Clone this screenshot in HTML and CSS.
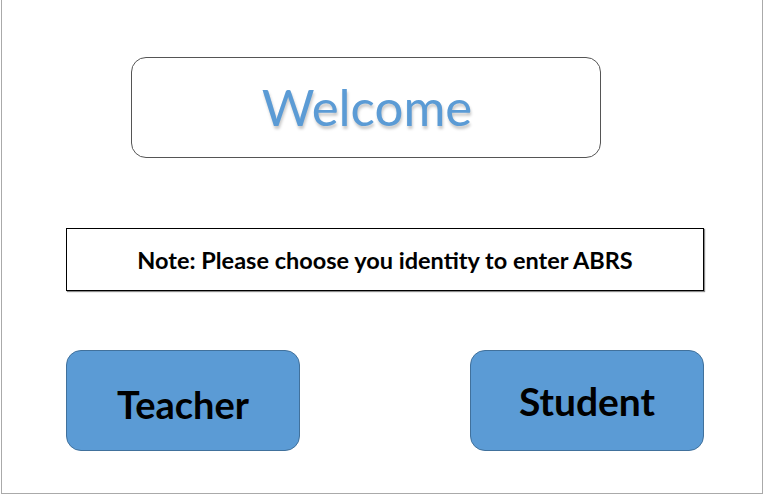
FILE: index.html
```html
<!DOCTYPE html>
<html>
<head>
<meta charset="utf-8">
<link rel="stylesheet" href="styles.css">
</head>
<body>
<div class="frame">
  <div class="welcome"><span class="welcome-text">Welcome</span></div>
  <div class="note">Note: Please choose you identity to enter ABRS</div>
  <div class="actions">
    <div class="btn btn-teacher">Teacher</div>
    <div class="btn btn-student">Student</div>
  </div>
</div>
</body>
</html>
```

FILE: styles.css
```css
html, body {
  margin: 0;
  padding: 0;
  background: #ffffff;
}
body {
  font-family: Lato, "Open Sans", sans-serif;
}
.frame {
  margin-left: 1px;
  width: 762px;
  height: 494px;
  border-left: 1px solid #aaaaaa;
  border-right: 1px solid #aaaaaa;
  border-bottom: 1px solid #aaaaaa;
  box-sizing: border-box;
  padding-top: 57px;
  display: flex;
  flex-direction: column;
}
.welcome {
  margin-left: 129px;
  width: 470px;
  height: 101px;
  box-sizing: border-box;
  border: 1px solid #555555;
  border-radius: 15px;
  display: flex;
  align-items: center;
  justify-content: center;
}
.welcome-text {
  color: #5b9bd5;
  font-size: 51px;
  line-height: 1;
  text-shadow: 1px 3px 3px rgba(0,0,0,0.22);
  margin-top: -2px;
  margin-left: 2px;
}
.note {
  margin-top: 70px;
  margin-left: 64px;
  width: 638px;
  height: 63px;
  box-sizing: border-box;
  border: 1px solid #000000;
  box-shadow: 1px 1px 1px rgba(0,0,0,0.45);
  display: flex;
  align-items: center;
  justify-content: center;
  font-weight: bold;
  font-size: 23.5px;
  color: #000;
}
.actions {
  margin-top: 59px;
  margin-left: 64px;
  width: 638px;
  display: flex;
  justify-content: space-between;
}
.btn {
  width: 234px;
  height: 101px;
  box-sizing: border-box;
  background: #5b9bd5;
  border: 1px solid #41719c;
  border-radius: 15px;
  display: flex;
  align-items: center;
  justify-content: center;
  font-weight: bold;
  color: #000;
}
.btn-teacher {
  font-size: 38px;
  padding-top: 6px;
}
.btn-student {
  font-size: 39px;
  padding-top: 0;
}
```
